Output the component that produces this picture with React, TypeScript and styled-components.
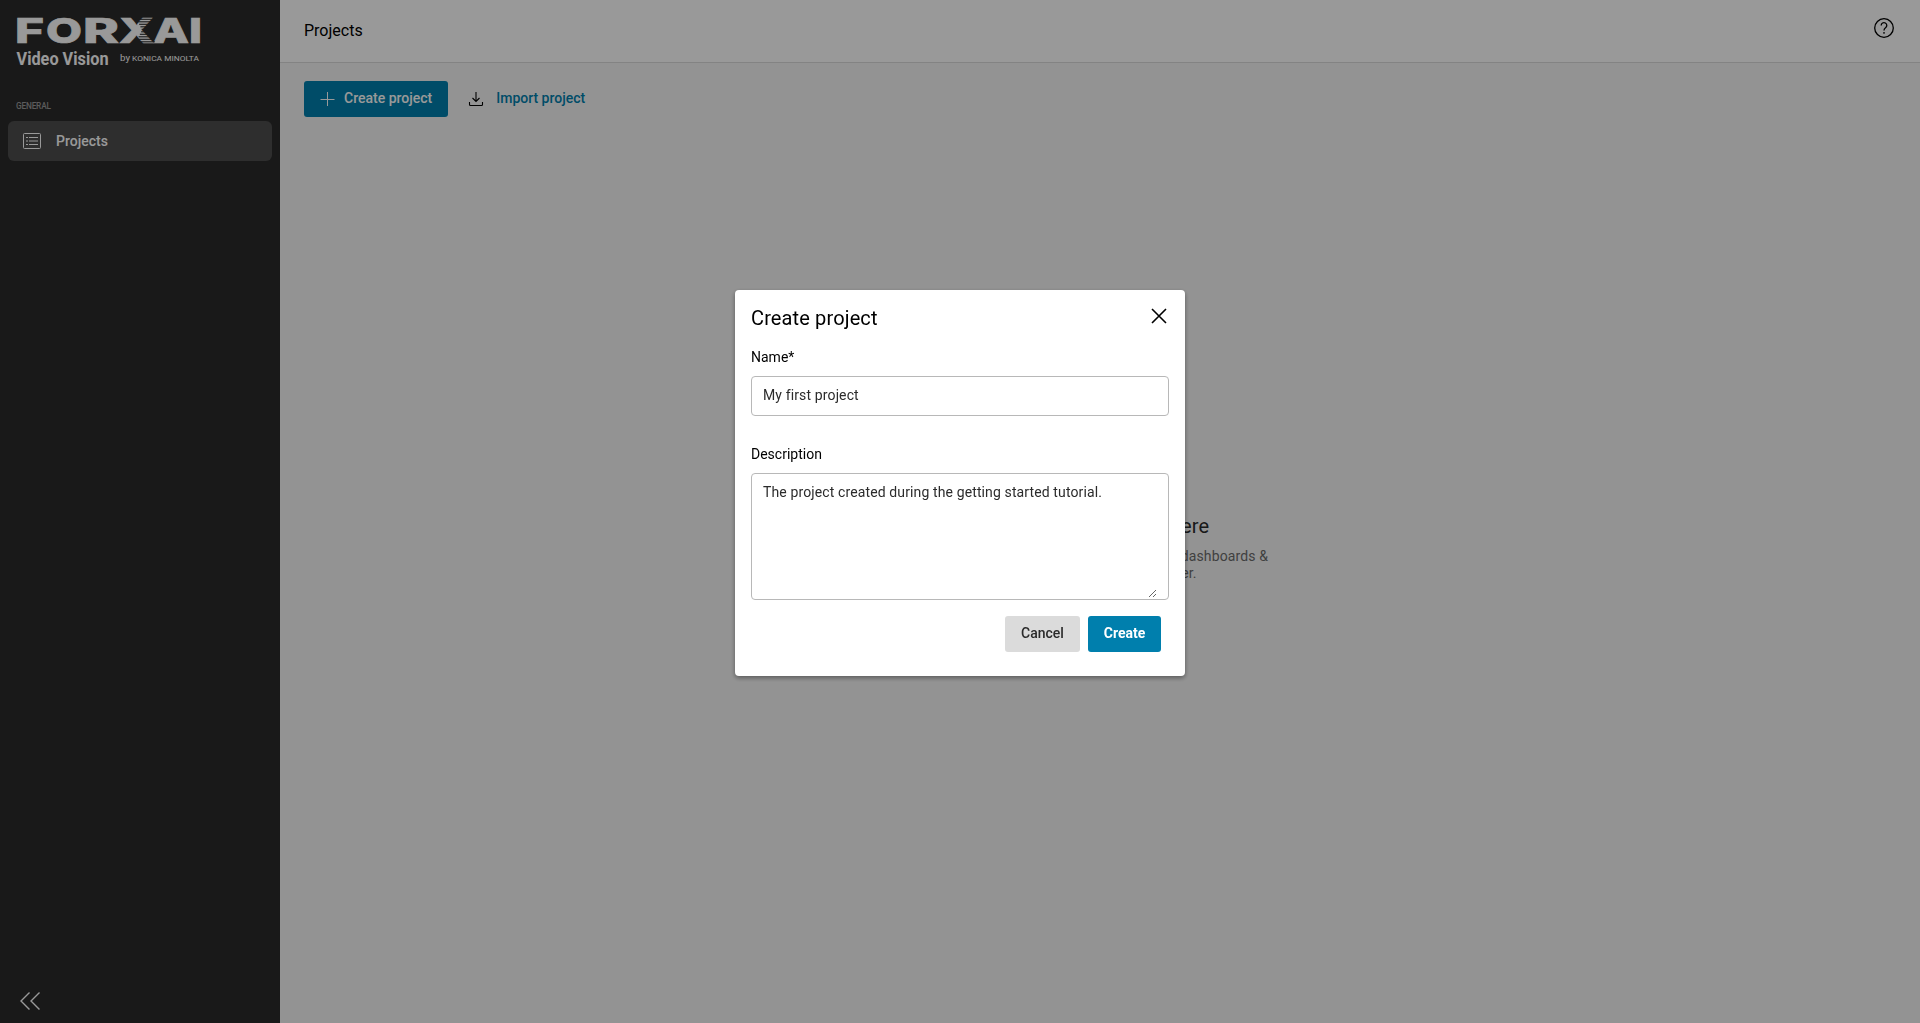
import React from "react";
import styled, { createGlobalStyle } from "styled-components";

const GlobalStyle = createGlobalStyle`
  *, *::before, *::after { box-sizing: border-box; }
  body { margin: 0; font-family: Roboto, "Liberation Sans", sans-serif; font-size: 14px; color: #000; overflow: hidden; }
  button, input, textarea { font-family: inherit; }
`;

const Shell = styled.div`
  display: flex;
  width: 100%;
  height: 100vh;
`;

const Sidebar = styled.aside`
  display: flex;
  flex-direction: column;
  flex: 0 0 280px;
  padding: 7px 8px 12px;
  background: #2b2b2b;
  color: #fff;
`;

const Brand = styled.svg`
  display: block;
  flex: none;
  width: 210px;
  height: 62px;
  overflow: visible;
`;

const SectionLabel = styled.div`
  margin: 32px 0 0 8px;
  font-size: 8.3px;
  font-weight: 500;
  letter-spacing: -0.2px;
  line-height: 10px;
  color: #999;
`;

const NavItem = styled.a`
  display: flex;
  align-items: center;
  gap: 15px;
  height: 40px;
  margin-top: 10px;
  padding-left: 15px;
  border-radius: 6px;
  background: #4d4d4d;
  font-size: 14px;
  font-weight: 500;
`;

const Collapse = styled.button`
  display: flex;
  align-self: flex-start;
  margin: auto 0 0 11px;
  padding: 0;
  border: 0;
  background: none;
  color: #fff;
`;

const Main = styled.main`
  display: flex;
  flex: 1;
  flex-direction: column;
  background: #f6f6f6;
`;

const Header = styled.header`
  display: flex;
  justify-content: space-between;
  height: 63px;
  padding: 18px 26px 0 24px;
  border-bottom: 1px solid #dadada;
  background: #fff;
`;

const PageTitle = styled.h1`
  margin: 0;
  padding-top: 3px;
  font-size: 16px;
  font-weight: 400;
  line-height: 20px;
`;

const Toolbar = styled.div`
  display: flex;
  gap: 8px;
  padding: 18px 24px;
`;

const Button = styled.button<{ $kind: "primary" | "neutral" | "link"; $icon?: boolean; $width?: number }>`
  display: flex;
  align-items: center;
  justify-content: center;
  gap: ${(p) => (p.$kind === "link" ? 12 : 9)}px;
  width: ${(p) => (p.$width ? `${p.$width}px` : "auto")};
  height: 36px;
  padding: ${(p) => (p.$width ? "0" : p.$kind === "link" ? "0 12px" : "0 16px")};
  border: 0;
  border-radius: 3px;
  background: ${(p) => ({ primary: "#007fad", neutral: "#dbdbdb", link: "transparent" })[p.$kind]};
  color: ${(p) => ({ primary: "#fff", neutral: "#2b2b2b", link: "#007fad" })[p.$kind]};
  font-size: 14px;
  font-weight: ${(p) => (p.$kind === "primary" && !p.$icon ? 700 : 500)};
  line-height: 34px;
  white-space: nowrap;
  & > span { padding-bottom: 2px; }
`;

const EmptyState = styled.section`
  display: flex;
  flex-direction: column;
  align-items: center;
  padding-top: 379px;
  text-align: center;
  white-space: nowrap;
`;

const EmptyTitle = styled.h2`
  margin: 0;
  font-size: 20px;
  font-weight: 400;
  letter-spacing: 0.1px;
  line-height: 24px;
  color: #2b2b2b;
`;

const EmptyText = styled.p`
  margin: 10px 0 0;
  font-size: 14px;
  letter-spacing: 0.13px;
  line-height: 17px;
  color: #6b6b6b;
`;

const Backdrop = styled.div`
  position: fixed;
  inset: 0;
  display: flex;
  align-items: flex-start;
  justify-content: center;
  padding-top: 290px;
  background: rgba(0, 0, 0, 0.4);
`;

const Dialog = styled.form`
  display: flex;
  flex-direction: column;
  width: 450px;
  height: 386px;
  padding: 16px;
  border-radius: 4px;
  background: #fff;
  box-shadow: 0 2px 5px rgba(0, 0, 0, 0.4);
`;

const DialogHeader = styled.div`
  display: flex;
  justify-content: space-between;
  height: 42px;
`;

const DialogTitle = styled.h2`
  margin: 0;
  font-size: 20px;
  font-weight: 400;
  letter-spacing: 0.13px;
  line-height: 24px;
`;

const Label = styled.label`
  display: block;
  height: 28px;
  font-size: 14px;
  line-height: 18px;
`;

const Input = styled.input`
  width: 100%;
  height: 40px;
  margin: 0 0 29px;
  padding: 0 11px 2px;
  border: 1px solid #b8b8b8;
  border-radius: 4px;
  outline: 0;
  font-size: 14px;
  letter-spacing: 0.13px;
  color: #2b2b2b;
`;

const AreaFrame = styled.div`
  height: 127px;
  padding: 0 11px;
  border: 1px solid #b8b8b8;
  border-radius: 4px;
`;

const Area = styled.textarea`
  display: block;
  width: 100%;
  height: 124px;
  margin: 0;
  padding: 10px 0 0;
  border: 0;
  outline: 0;
  background: transparent;
  font-size: 14px;
  letter-spacing: 0.12px;
  line-height: 17px;
  color: #2b2b2b;
  resize: vertical;
`;

const Actions = styled.div`
  display: flex;
  justify-content: flex-end;
  gap: 8px;
  padding: 16px 8px 0 0;
`;

const stripes = Array.from({ length: 10 }, (_, i) => 2.3 + i * 2.5);

const Logo = () => (
  <Brand viewBox="-8 -10 210 62" fill="#fff">
    <g fontFamily="Inter, sans-serif" fontWeight="800" fontSize="34" stroke="#fff" strokeWidth="0.7">
      <text x="-1" y="25.500" textLength="29" lengthAdjust="spacingAndGlyphs">F</text>
      <text x="30" y="25.500" textLength="36" lengthAdjust="spacingAndGlyphs">O</text>
      <text x="67" y="25.500" textLength="36" lengthAdjust="spacingAndGlyphs">R</text>
      <text x="103" y="25.500" textLength="35" lengthAdjust="spacingAndGlyphs">X</text>
      <text x="137" y="25.500" textLength="36" lengthAdjust="spacingAndGlyphs">A</text>
      <text x="173" y="25.500" textLength="13" lengthAdjust="spacingAndGlyphs">I</text>
    </g>
    <g stroke="#2b2b2b" strokeWidth="1.1">
      {stripes.map((y) => (
        <line key={y} x1={126 - Math.abs(y - 13) * 0.5} x2={127 + Math.abs(y - 13)} y1={y} y2={y} />
      ))}
    </g>
    <text x="0.500" y="47.500" fontFamily="Roboto, sans-serif" fontWeight="700" fontSize="18" textLength="92" lengthAdjust="spacingAndGlyphs">Video Vision</text>
    <text x="104" y="44" fontFamily="Roboto, sans-serif" fontSize="9" textLength="10" lengthAdjust="spacingAndGlyphs">by</text>
    <text x="116" y="44" fontFamily="Roboto, sans-serif" fontSize="8" textLength="67" lengthAdjust="spacingAndGlyphs">KONICA MINOLTA</text>
  </Brand>
);

const App = () => (
  <>
    <GlobalStyle />
    <Shell>
      <Sidebar>
        <Logo />
        <SectionLabel>GENERAL</SectionLabel>
        <NavItem>
          <svg width="18" height="16" fill="none" stroke="#fff" strokeWidth="1">
            <rect x=".5" y=".5" width="17" height="15" rx="1" />
            <path d="M3 4.500h2M6 4.500h9M3 8h2M6 8h9M3 11.500h2M6 11.500h9" />
          </svg>
          Projects
        </NavItem>
        <Collapse>
          <svg width="22" height="20" fill="none" stroke="currentColor" strokeWidth="1.4">
            <path d="M10.500 1.500L2 10l8.500 8.500M20.500 1.500L12 10l8.500 8.500" />
          </svg>
        </Collapse>
      </Sidebar>
      <Main>
        <Header>
          <PageTitle>Projects</PageTitle>
          <svg width="20" height="20" fill="none" stroke="#000" strokeWidth="1.3">
            <circle cx="10" cy="10" r="9.300" />
            <path d="M7.200 7.500a2.800 2.800 0 1 1 4.300 2.300c-1 .7-1.500 1.200-1.500 2.700M10 14v1.800" />
          </svg>
        </Header>
        <Toolbar>
          <Button $kind="primary" $icon>
            <svg width="15" height="14" stroke="#fff" strokeWidth="1"><path d="M7.500 0v14M.5 7.500h14" /></svg>
            <span>Create project</span>
          </Button>
          <Button $kind="link">
            <svg width="16" height="16" fill="none" stroke="#000" strokeWidth="1.1">
              <path d="M8 1v9M4.500 7L8 10.500 11.500 7M1.500 11v2.500q0 1 1 1h11q1 0 1-1V11" />
            </svg>
            <span>Import project</span>
          </Button>
        </Toolbar>
        <EmptyState>
          <EmptyTitle>Your projects arrive here</EmptyTitle>
          <EmptyText>
            Create a project to store your cameras, dashboards &amp;
            <br />
            applications grouped together.
          </EmptyText>
        </EmptyState>
      </Main>
    </Shell>
    <Backdrop>
      <Dialog>
        <DialogHeader>
          <DialogTitle>Create project</DialogTitle>
          <svg width="20" height="20" stroke="#000" strokeWidth="1.600"><path d="M3 3l14 14M17 3L3 17" /></svg>
        </DialogHeader>
        <Label>Name*</Label>
        <Input defaultValue="My first project" />
        <Label>Description</Label>
        <AreaFrame>
          <Area defaultValue="The project created during the getting started tutorial." />
        </AreaFrame>
        <Actions>
          <Button type="button" $kind="neutral" $width={75}><span>Cancel</span></Button>
          <Button type="button" $kind="primary" $width={73}><span>Create</span></Button>
        </Actions>
      </Dialog>
    </Backdrop>
  </>
);

export default App;
